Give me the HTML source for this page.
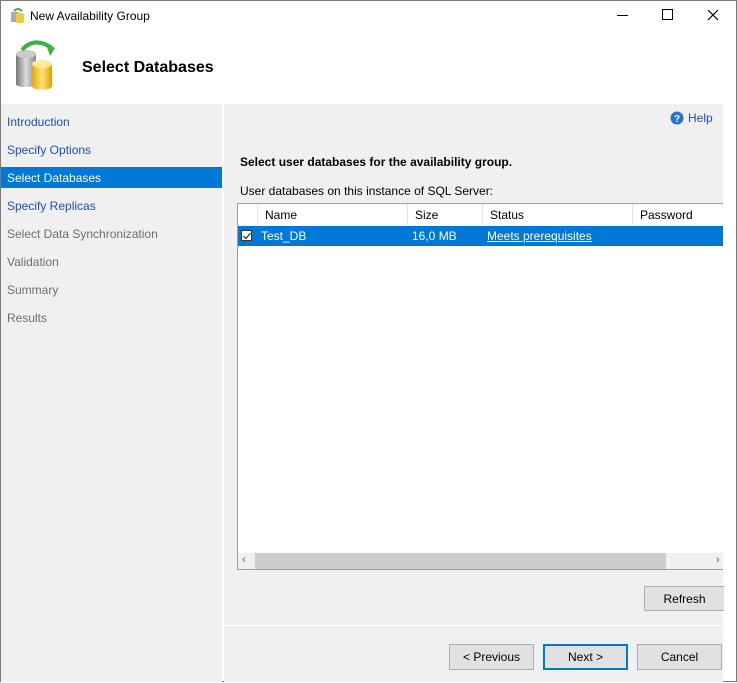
<!DOCTYPE html><html><head><style>
body{margin:0;width:737px;height:683px;position:relative;font-family:"Liberation Sans",sans-serif;font-size:12px;overflow:hidden;background:#fff}
.a{position:absolute}
.btn{position:absolute;background:#e1e1e1;border:1px solid #adadad;box-sizing:border-box;text-align:center;line-height:24px;color:#000}
.nav{position:absolute;left:7px;color:#1a4fc4}
.g{color:#6d6d6d}
</style></head><body>
<div class="a" style="left:0;top:0;width:735px;height:681px;border:1px solid #7a7a7a;border-top:none"></div>
<div class="a" style="left:0;top:0;width:737px;height:1px;background:#7a7a7a"></div>
<svg class="a" style="left:10px;top:7px" width="16" height="16"><rect x="1" y="5" width="7" height="10" fill="#aaa"/><rect x="6" y="6" width="8" height="10" rx="2" fill="#f3c83a"/><path d="M4 4 Q8 0 12 4" stroke="#3cb043" stroke-width="2" fill="none"/></svg>
<div class="a" style="left:30px;top:9px;font-size:12px">New Availability Group</div>
<div class="a" style="left:617px;top:15px;width:11px;height:1px;background:#000"></div>
<div class="a" style="left:662px;top:9px;width:9px;height:9px;border:1px solid #000"></div>
<svg class="a" style="left:707px;top:9px" width="12" height="12"><path d="M1 1L11 11M11 1L1 11" stroke="#000" stroke-width="1.2"/></svg>
<svg class="a" style="left:12px;top:38px" width="50" height="58"><defs><linearGradient id="gg" x1="0" x2="1"><stop offset="0" stop-color="#777"/><stop offset=".5" stop-color="#ddd"/><stop offset="1" stop-color="#888"/></linearGradient><linearGradient id="yy" x1="0" x2="1"><stop offset="0" stop-color="#e6a800"/><stop offset=".5" stop-color="#ffe27a"/><stop offset="1" stop-color="#e0a000"/></linearGradient></defs>
<path d="M4 16v30c0 4 20 4 20 0V16z" fill="url(#gg)"/><ellipse cx="14" cy="16" rx="10" ry="4" fill="#ccc"/>
<path d="M20 26v22c0 5 20 5 20 0V26z" fill="url(#yy)"/><ellipse cx="30" cy="26" rx="10" ry="4" fill="#ffe89a"/>
<path d="M10 12Q22 -2 40 10" stroke="#3cb043" stroke-width="4" fill="none"/><path d="M34 6l9 4-5 8z" fill="#3cb043"/></svg>
<div class="a" style="left:82px;top:59px;font-size:16px;font-weight:bold">Select Databases</div>
<div class="a" style="left:1px;top:104px;width:221px;height:578px;background:#f0f0f0"></div>
<div class="a" style="left:224px;top:104px;width:499px;height:578px;background:#f0f0f0"></div>
<div class="a" style="left:1px;top:167px;width:221px;height:21px;background:#0078d7"></div>
<div class="nav" style="top:115px">Introduction</div>
<div class="nav" style="top:143px">Specify Options</div>
<div class="nav" style="top:171px;color:#fff">Select Databases</div>
<div class="nav" style="top:199px">Specify Replicas</div>
<div class="nav g" style="top:227px">Select Data Synchronization</div>
<div class="nav g" style="top:255px">Validation</div>
<div class="nav g" style="top:283px">Summary</div>
<div class="nav g" style="top:311px">Results</div>
<svg class="a" style="left:670px;top:111px" width="14" height="14"><circle cx="7" cy="7" r="6.5" fill="#2a6fd6"/><text x="7" y="11" font-size="10" font-weight="bold" fill="#fff" text-anchor="middle" font-family="Liberation Sans">?</text></svg>
<div class="a" style="left:688px;top:111px;color:#1a4fc4">Help</div>
<div class="a" style="left:240px;top:155px;font-weight:bold">Select user databases for the availability group.</div>
<div class="a" style="left:240px;top:184px">User databases on this instance of SQL Server:</div>
<div class="a" style="left:237px;top:203px;width:486px;height:367px;background:#fff;border:1px solid #a0a0a0;border-right:none;box-sizing:border-box"></div>
<div class="a" style="left:257px;top:204px;width:1px;height:21px;background:#e5e5e5"></div>
<div class="a" style="left:407px;top:204px;width:1px;height:21px;background:#e5e5e5"></div>
<div class="a" style="left:482px;top:204px;width:1px;height:21px;background:#e5e5e5"></div>
<div class="a" style="left:632px;top:204px;width:1px;height:21px;background:#e5e5e5"></div>
<div class="a" style="left:265px;top:208px">Name</div>
<div class="a" style="left:415px;top:208px">Size</div>
<div class="a" style="left:490px;top:208px">Status</div>
<div class="a" style="left:640px;top:208px">Password</div>
<div class="a" style="left:238px;top:226px;width:485px;height:20px;background:#0078d7"></div>
<div class="a" style="left:241px;top:230px;width:11px;height:11px;border:1px solid #333;background:#fff;box-sizing:border-box"></div>
<svg class="a" style="left:242px;top:231px" width="10" height="10"><path d="M1.5 5L4 7.5 8.5 2" stroke="#333" stroke-width="1.3" fill="none"/></svg>
<div class="a" style="left:261px;top:229px;color:#fff">Test_DB</div>
<div class="a" style="left:412px;top:229px;color:#fff">16,0 MB</div>
<div class="a" style="left:487px;top:229px;color:#fff;text-decoration:underline">Meets prerequisites</div>
<div class="a" style="left:238px;top:553px;width:485px;height:16px;background:#f0f0f0"></div>
<div class="a" style="left:255px;top:553px;width:411px;height:16px;background:#cdcdcd"></div>
<div class="a" style="left:242px;top:554px;font-size:11px;color:#606060">&#8249;</div>
<div class="a" style="left:716px;top:554px;font-size:11px;color:#606060">&#8250;</div>
<div class="btn" style="left:644px;top:586px;width:80px;height:25px;border-right:none">Refresh</div>
<div class="a" style="left:224px;top:625px;width:499px;height:1px;background:#fff"></div>
<div class="btn" style="left:449px;top:644px;width:85px;height:26px">&lt; Previous</div>
<div class="btn" style="left:543px;top:644px;width:85px;height:26px;border:2px solid #0078d7;line-height:22px">Next &gt;</div>
<div class="btn" style="left:637px;top:644px;width:85px;height:26px">Cancel</div>
</body></html>
